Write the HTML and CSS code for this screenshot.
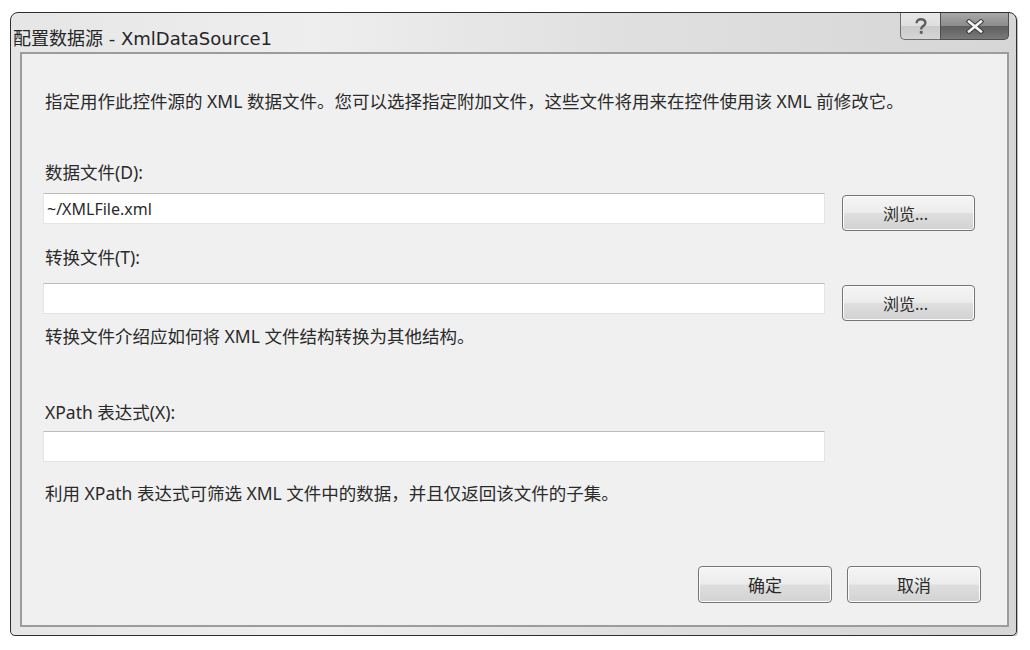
FILE: index.html
```html
<!DOCTYPE html>
<html lang="zh-CN">
<head>
<meta charset="utf-8">
<title>配置数据源 - XmlDataSource1</title>
<link rel="stylesheet" href="styles.css">
</head>
<body>
<div class="window">
  <div class="titlebar">
    <div class="title">配置数据源 - XmlDataSource1</div>
    <div class="caption-buttons">
      <div class="cap-btn help">
        <svg width="14" height="17" viewBox="0 0 14 17">
          <path d="M2.6 5.2 C2.6 2.4 4.6 1.2 7 1.2 C9.6 1.2 11.4 2.8 11.4 5 C11.4 7.2 9.4 7.8 8.2 8.8 C7.3 9.6 7.2 10.4 7.2 11.6" fill="none" stroke="#5e5e5e" stroke-width="2.4"/>
          <rect x="5.8" y="13" width="2.8" height="2.8" fill="#5e5e5e"/>
        </svg>
      </div>
      <div class="cap-btn close">
        <svg width="20" height="15" viewBox="0 0 20 15">
          <path d="M4 2.5 L16 12.5 M16 2.5 L4 12.5" stroke="#3a3a3a" stroke-width="4.6" stroke-linecap="square"/>
          <path d="M4 2.5 L16 12.5 M16 2.5 L4 12.5" stroke="#f4f4f4" stroke-width="2.6" stroke-linecap="square"/>
        </svg>
      </div>
    </div>
  </div>
  <div class="client">
    <p class="intro">指定用作此控件源的 XML 数据文件。您可以选择指定附加文件，这些文件将用来在控件使用该 XML 前修改它。</p>

    <label class="label label-data">数据文件(D):</label>
    <div class="row row-data">
      <div class="input">~/XMLFile.xml</div>
      <button class="btn browse">浏览...</button>
    </div>

    <label class="label label-trans">转换文件(T):</label>
    <div class="row row-trans">
      <div class="input"></div>
      <button class="btn browse">浏览...</button>
    </div>
    <p class="desc desc-trans">转换文件介绍应如何将 XML 文件结构转换为其他结构。</p>

    <label class="label label-xpath">XPath 表达式(X):</label>
    <div class="row row-xpath">
      <div class="input"></div>
    </div>
    <p class="desc desc-xpath">利用 XPath 表达式可筛选 XML 文件中的数据，并且仅返回该文件的子集。</p>

    <div class="footer">
      <button class="btn action">确定</button>
      <button class="btn action">取消</button>
    </div>
  </div>
</div>
</body>
</html>
```

FILE: styles.css
```css
* { box-sizing: border-box; }

html, body {
  margin: 0;
  padding: 0;
  background: #ffffff;
}

body {
  font-family: "Noto Sans", "Noto Sans CJK SC", sans-serif;
  color: #2a2a2a;
  padding: 12px 0 0 10px;
}

.window {
  width: 1007px;
  height: 624px;
  border: 1px solid #2e2e2e;
  border-radius: 8px 8px 5px 5px;
  background: linear-gradient(90deg, #e6e6e6 0%, #eeeeee 30%, #e0e0e0 60%, #d6d6d6 100%);
  padding: 0 7px 8px 9px;
  display: flex;
  flex-direction: column;
  box-shadow: 1px 1px 0 #bdbdbd;
}

.titlebar {
  height: 39px;
  display: flex;
  align-items: flex-start;
  justify-content: space-between;
}

.title {
  font-family: "DejaVu Sans", "Noto Sans CJK SC", sans-serif;
  font-size: 18px;
  line-height: 22px;
  margin-top: 15px;
  margin-left: -7px;
  color: #262626;
}

.caption-buttons {
  display: flex;
}

.cap-btn {
  height: 27px;
  display: flex;
  align-items: center;
  justify-content: center;
  border: 1px solid #6e6e6e;
  border-top: none;
}

.cap-btn.help {
  width: 40px;
  border-radius: 0 0 0 5px;
  background: linear-gradient(180deg, #e8e8e8 0%, #dedede 50%, #cacaca 51%, #d6d6d6 100%);
  border-right: none;
}

.cap-btn.close {
  width: 69px;
  border-radius: 0 0 5px 0;
  background: linear-gradient(180deg, #a8a8a8 0%, #8c8c8c 50%, #5e5e5e 51%, #7a7a7a 100%);
  border-color: #4e4e4e;
}

.client {
  flex: 1;
  border: 2px solid #9c9c9c;
  background: #f0f0f0;
  padding: 0 0 0 21px;
  display: flex;
  flex-direction: column;
  font-size: 17.5px;
  line-height: 20px;
}

.intro {
  margin: 37px 0 0 2px;
}

.label {
  display: block;
  margin-left: 2px;
}

.label-data { margin-top: 51px; }
.label-trans { margin-top: 16px; }
.label-xpath { margin-top: 56px; }

.row {
  display: flex;
  align-items: flex-start;
  gap: 17px;
}

.row-data { margin-top: 11px; }
.row-trans { margin-top: 16px; }
.row-xpath { margin-top: 9px; }

.input {
  width: 782px;
  height: 31px;
  background: #ffffff;
  border: 1px solid #e4e4e4;
  border-top-color: #bcbcbc;
  padding: 5px 0 0 3px;
  font-size: 16px;
  line-height: 20px;
}

.desc {
  margin: 0 0 0 2px;
}

.desc-trans { margin-top: 5px; }
.desc-xpath { margin-top: 21px; }

.btn {
  font-family: "Noto Sans", "Noto Sans CJK SC", sans-serif;
  font-size: 16px;
  color: #2a2a2a;
  border: 1px solid #757575;
  border-radius: 4px;
  background: linear-gradient(180deg, #f5f5f5 0%, #ececec 48%, #dedede 52%, #d2d2d2 100%);
  box-shadow: inset 0 0 0 1px #fbfbfb;
  padding: 0;
}

.browse {
  width: 133px;
  height: 36px;
  margin-top: 2px;
  padding-right: 6px;
}

.footer {
  display: flex;
  justify-content: flex-end;
  gap: 15px;
  margin-top: auto;
  margin-bottom: 22px;
  padding-right: 26px;
}

.action {
  width: 134px;
  height: 37px;
  font-size: 17px;
}
```
